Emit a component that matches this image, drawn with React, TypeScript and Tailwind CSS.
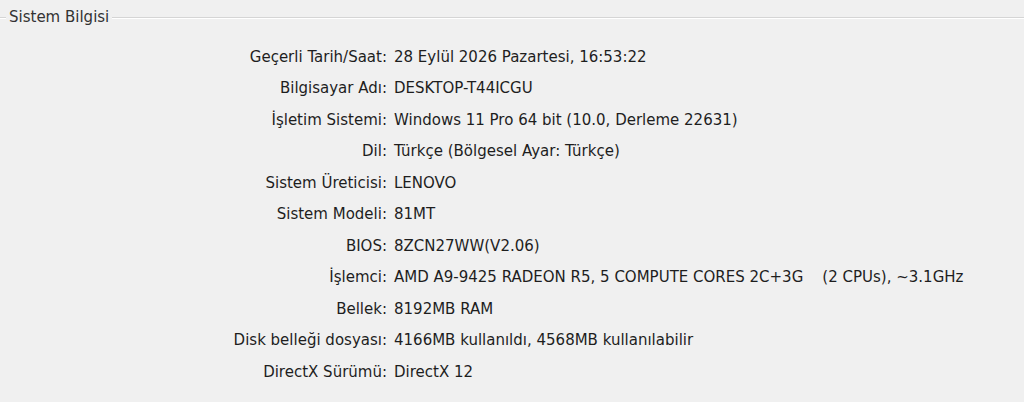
import React from "react";

const rows: [string, string][] = [
  ["Geçerli Tarih/Saat:", "28 Eylül 2026 Pazartesi, 16:53:22"],
  ["Bilgisayar Adı:", "DESKTOP-T44ICGU"],
  ["İşletim Sistemi:", "Windows 11 Pro 64 bit (10.0, Derleme 22631)"],
  ["Dil:", "Türkçe (Bölgesel Ayar: Türkçe)"],
  ["Sistem Üreticisi:", "LENOVO"],
  ["Sistem Modeli:", "81MT"],
  ["BIOS:", "8ZCN27WW(V2.06)"],
  ["İşlemci:", "AMD A9-9425 RADEON R5, 5 COMPUTE CORES 2C+3G\u00a0\u00a0\u00a0\u00a0(2 CPUs), ~3.1GHz"],
  ["Bellek:", "8192MB RAM"],
  ["Disk belleği dosyası:", "4166MB kullanıldı, 4568MB kullanılabilir"],
  ["DirectX Sürümü:", "DirectX 12"],
];

export default function App() {
  return (
    <div
      className="w-[1024px] h-[402px] bg-[#f0f0f0] text-[#1e1e1e] overflow-hidden"
      style={{ fontFamily: '"DejaVu Sans", Verdana, sans-serif' }}
    >
      <div className="flex items-center h-[34px] pt-[1px]">
        <div className="w-[6px] flex flex-col">
          <div className="h-[1px] bg-[#d5d5d5]" />
          <div className="h-[1px] bg-white" />
        </div>
        <span className="px-[3px] text-[15px] text-[#333]">Sistem Bilgisi</span>
        <div className="flex-1 flex flex-col">
          <div className="h-[1px] bg-[#d5d5d5]" />
          <div className="h-[1px] bg-white" />
        </div>
      </div>
      <div className="pt-[7px] flex flex-col">
        {rows.map(([k, v]) => (
          <div key={k} className="flex items-center h-[31.5px] text-[15px]">
            <div className="w-[387px] text-right whitespace-nowrap">{k}</div>
            <div className="pl-[7px] whitespace-nowrap">{v}</div>
          </div>
        ))}
      </div>
    </div>
  );
}
